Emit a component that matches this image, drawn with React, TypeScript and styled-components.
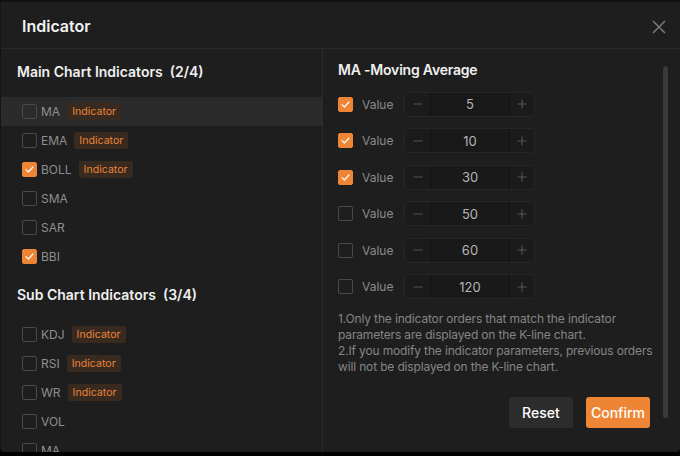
import React from "react";
import styled, { createGlobalStyle } from "styled-components";

const Global = createGlobalStyle`
  html, body { margin: 0; padding: 0; background: #000; }
  body { font-family: Inter, "Noto Sans", "Liberation Sans", sans-serif; -webkit-font-smoothing: antialiased; }
  * { box-sizing: border-box; }
`;

const Modal = styled.div`
  width: 680px;
  height: 452px;
  background: #1e1e1e;
  border-top: 2px solid #111;
  border-left: 1px solid #141414;
  border-bottom-left-radius: 4px;
  border-bottom-right-radius: 4px;
  display: flex;
  flex-direction: column;
  overflow: hidden;
`;

const Header = styled.div`
  height: 47px;
  flex: none;
  display: flex;
  align-items: center;
  justify-content: space-between;
  padding: 1px 12px 0 21px;
  border-bottom: 1px solid #2b2b2b;
`;

const Title = styled.div`
  color: #f2f2f2;
  font-size: 16px;
  font-weight: 600;
`;

const Close = styled.button`
  background: none;
  border: 0;
  padding: 0;
  width: 18px;
  height: 18px;
  margin-top: 3px;
  display: flex;
  align-items: center;
  justify-content: center;
  cursor: pointer;
`;

const Body = styled.div`
  flex: 1;
  display: grid;
  grid-template-columns: 322px 1fr;
  min-height: 0;
`;

const LeftCol = styled.div`
  border-right: 1px solid #2b2b2b;
  overflow: hidden;
`;

const SectionTitle = styled.div<{ $top: number }>`
  color: #f0f0f0;
  font-size: 14px;
  font-weight: 600;
  line-height: 20px;
  padding: ${(p) => p.$top}px 16px 15px 16px;
  white-space: pre;
`;

const Row = styled.div<{ $active?: boolean }>`
  height: 29px;
  display: flex;
  align-items: center;
  padding-left: 21px;
  background: ${(p) => (p.$active ? "#2b2b2b" : "transparent")};
`;

const Box = styled.span<{ $checked?: boolean }>`
  width: 15px;
  height: 15px;
  flex: none;
  border-radius: 2px;
  border: 1px solid ${(p) => (p.$checked ? "#ee8535" : "#4a4a4a")};
  background: ${(p) => (p.$checked ? "#ee8535" : "transparent")};
  display: flex;
  align-items: center;
  justify-content: center;
`;

const Label = styled.span`
  margin-left: 4px;
  color: #8e8e8e;
  font-size: 12px;
`;

const Badge = styled.span`
  margin-left: 7px;
  height: 17px;
  line-height: 17px;
  padding: 0 5px;
  border-radius: 2px;
  background: #392a1f;
  color: #e8833a;
  font-size: 10.6px;
`;

const RightCol = styled.div`
  display: flex;
  min-width: 0;
`;

const RightContent = styled.div`
  flex: 1;
  padding: 11px 0 0 15px;
  display: flex;
  flex-direction: column;
`;

const Track = styled.div`
  width: 30px;
  flex: none;
  padding: 17px 12px 0 13px;
`;

const Thumb = styled.div`
  width: 5px;
  height: 352px;
  border-radius: 3px;
  background: #3a3a3a;
`;

const ParamTitle = styled.div`
  color: #f0f0f0;
  font-size: 14px;
  font-weight: 600;
  line-height: 20px;
  letter-spacing: -0.2px;
  margin-bottom: 12px;
`;

const ParamList = styled.div`
  display: flex;
  flex-direction: column;
  gap: 12.5px;
`;

const ParamRow = styled.div`
  height: 24px;
  display: flex;
  align-items: center;
`;

const ValueLabel = styled.span`
  width: 51px;
  padding-left: 9px;
  color: #8a8a8a;
  font-size: 12px;
`;

const Stepper = styled.div`
  width: 131px;
  height: 25px;
  display: grid;
  grid-template-columns: 25px 1fr 24px;
  border: 1px solid #262626;
  border-radius: 4px;
  background: #1b1b1b;
  overflow: hidden;
`;

const StepBtn = styled.span`
  display: flex;
  align-items: center;
  justify-content: center;
`;

const StepValue = styled.span`
  display: flex;
  align-items: center;
  justify-content: center;
  background: #191919;
  border-left: 1px solid #121212;
  border-right: 1px solid #121212;
  color: #b4b4b4;
  font-size: 13px;
`;

const Notes = styled.div`
  margin-top: 12px;
  margin-right: -4px;
  color: #858585;
  font-size: 12px;
  line-height: 16.3px;
  letter-spacing: -0.15px;
`;

const Actions = styled.div`
  margin-top: 21px;
  display: flex;
  justify-content: flex-end;
  gap: 13px;
`;

const Button = styled.button<{ $primary?: boolean }>`
  height: 31px;
  min-width: 64px;
  padding: 0 5px;
  border: 0;
  border-radius: 3px;
  background: ${(p) => (p.$primary ? "#ee8535" : "#2c2c2c")};
  color: #fff;
  font-family: inherit;
  font-size: 14px;
  font-weight: 500;
  cursor: pointer;
`;

const Check = () => (
  <svg width="9" height="7" viewBox="0 0 9 7" fill="none">
    <path d="M1 3.6 L3.4 6 L8 1" stroke="#fff" strokeWidth="1.2" strokeLinecap="round" strokeLinejoin="round" />
  </svg>
);

const Minus = () => (
  <svg width="10" height="10" viewBox="0 0 10 10">
    <path d="M0.5 5 H9.5" stroke="#555" strokeWidth="1.1" />
  </svg>
);

const Plus = () => (
  <svg width="10" height="10" viewBox="0 0 10 10">
    <path d="M0.5 5 H9.5 M5 0.5 V9.5" stroke="#555" strokeWidth="1.1" />
  </svg>
);

type Ind = { name: string; badge?: boolean; checked?: boolean; active?: boolean };

const main: Ind[] = [
  { name: "MA", badge: true, active: true },
  { name: "EMA", badge: true },
  { name: "BOLL", badge: true, checked: true },
  { name: "SMA" },
  { name: "SAR" },
  { name: "BBI", checked: true },
];

const sub: Ind[] = [
  { name: "KDJ", badge: true },
  { name: "RSI", badge: true },
  { name: "WR", badge: true },
  { name: "VOL" },
  { name: "MA" },
];

const params = [
  { v: 5, c: true },
  { v: 10, c: true },
  { v: 30, c: true },
  { v: 50, c: false },
  { v: 60, c: false },
  { v: 120, c: false },
];

const IndRow = ({ item }: { item: Ind }) => (
  <Row $active={item.active}>
    <Box $checked={item.checked}>{item.checked && <Check />}</Box>
    <Label>{item.name}</Label>
    {item.badge && <Badge>Indicator</Badge>}
  </Row>
);

export default function App() {
  return (
    <>
      <Global />
      <Modal>
        <Header>
          <Title>Indicator</Title>
          <Close aria-label="close">
            <svg width="14" height="14" viewBox="0 0 14 14">
              <path d="M1 1 L13 13 M13 1 L1 13" stroke="#7a7a7a" strokeWidth="1.5" />
            </svg>
          </Close>
        </Header>
        <Body>
          <LeftCol>
            <SectionTitle $top={13}>{"Main Chart Indicators  (2/4)"}</SectionTitle>
            {main.map((m) => (
              <IndRow key={"m" + m.name} item={m} />
            ))}
            <SectionTitle $top={14}>{"Sub Chart Indicators  (3/4)"}</SectionTitle>
            {sub.map((m) => (
              <IndRow key={"s" + m.name} item={m} />
            ))}
          </LeftCol>
          <RightCol>
            <RightContent>
              <ParamTitle>MA -Moving Average</ParamTitle>
              <ParamList>
                {params.map((p, i) => (
                  <ParamRow key={i}>
                    <Box $checked={p.c}>{p.c && <Check />}</Box>
                    <ValueLabel>Value</ValueLabel>
                    <Stepper>
                      <StepBtn><Minus /></StepBtn>
                      <StepValue>{p.v}</StepValue>
                      <StepBtn><Plus /></StepBtn>
                    </Stepper>
                  </ParamRow>
                ))}
              </ParamList>
              <Notes>
                1.Only the indicator orders that match the indicator parameters are displayed on the K-line chart.
                <br />
                2.If you modify the indicator parameters, previous orders will not be displayed on the K-line chart.
              </Notes>
              <Actions>
                <Button>Reset</Button>
                <Button $primary>Confirm</Button>
              </Actions>
            </RightContent>
            <Track>
              <Thumb />
            </Track>
          </RightCol>
        </Body>
      </Modal>
    </>
  );
}
